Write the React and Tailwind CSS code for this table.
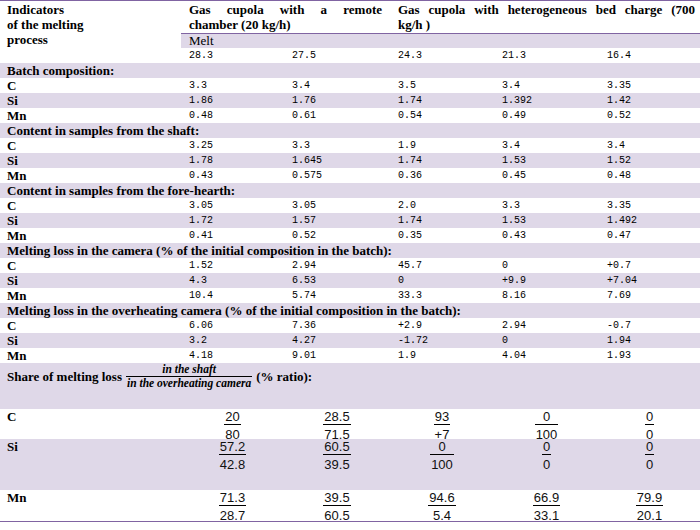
const GRID = "grid grid-cols-[181px_103px_106px_104px_105px_101px]";
const serif = "font-['Liberation_Serif',serif]";
const mono = "font-['Liberation_Mono',monospace] text-[10px]";

const sections = [
  {
    title: "Batch composition:",
    rows: [
      ["C", ["3.3", "3.4", "3.5", "3.4", "3.35"]],
      ["Si", ["1.86", "1.76", "1.74", "1.392", "1.42"]],
      ["Mn", ["0.48", "0.61", "0.54", "0.49", "0.52"]],
    ],
  },
  {
    title: "Content in samples from the shaft:",
    rows: [
      ["C", ["3.25", "3.3", "1.9", "3.4", "3.4"]],
      ["Si", ["1.78", "1.645", "1.74", "1.53", "1.52"]],
      ["Mn", ["0.43", "0.575", "0.36", "0.45", "0.48"]],
    ],
  },
  {
    title: "Content in samples from the fore-hearth:",
    rows: [
      ["C", ["3.05", "3.05", "2.0", "3.3", "3.35"]],
      ["Si", ["1.72", "1.57", "1.74", "1.53", "1.492"]],
      ["Mn", ["0.41", "0.52", "0.35", "0.43", "0.47"]],
    ],
  },
  {
    title: "Melting loss in the camera (% of the initial composition in the batch):",
    rows: [
      ["C", ["1.52", "2.94", "45.7", "0", "+0.7"]],
      ["Si", ["4.3", "6.53", "0", "+9.9", "+7.04"]],
      ["Mn", ["10.4", "5.74", "33.3", "8.16", "7.69"]],
    ],
  },
  {
    title: "Melting loss in the overheating camera (% of the initial composition in the batch):",
    rows: [
      ["C", ["6.06", "7.36", "+2.9", "2.94", "-0.7"]],
      ["Si", ["3.2", "4.27", "-1.72", "0", "1.94"]],
      ["Mn", ["4.18", "9.01", "1.9", "4.04", "1.93"]],
    ],
  },
];

const shares = [
  { label: "C", h: "h-[30px]", bg: "", values: [["20", "80"], ["28.5", "71.5"], ["93", "+7"], ["0", "100"], ["0", "0"]] },
  { label: "Si", h: "h-[51px]", bg: "bg-[#dfd8e8]", values: [["57.2", "42.8"], ["60.5", "39.5"], ["0", "100"], ["0", "0"], ["0", "0"]] },
  { label: "Mn", h: "h-[31px]", bg: "", values: [["71.3", "28.7"], ["39.5", "60.5"], ["94.6", "5.4"], ["66.9", "33.1"], ["79.9", "20.1"]] },
];

function DataRow({ label, values, shaded }) {
  return (
    <div className={`${GRID} h-[15px] leading-[15px] ${shaded ? "bg-[#dfd8e8]" : ""}`}>
      <div className="pl-[7px] font-bold text-[13px]">{label}</div>
      {values.map((v, i) => (
        <div key={i} className={`pl-2 ${mono}`}>{v}</div>
      ))}
    </div>
  );
}

function Fraction({ top, bottom }) {
  return (
    <div className="inline-flex flex-col items-center font-['Liberation_Sans',sans-serif] text-[13px] leading-[15px] text-[#111]">
      <span className="px-px">{top}</span>
      <span className="h-px w-full bg-black" />
      <span className="mt-[2px] px-px">{bottom}</span>
    </div>
  );
}

export default function App() {
  return (
    <div className={`w-[700px] bg-white text-black ${serif}`}>
      <div className="border-t border-[#8064a2]">
        <div className="flex">
          <div className="w-[181px] shrink-0 pl-[7px] pt-px text-[13px] font-bold leading-[15px]">
            Indicators
            <br />
            of the melting
            <br />
            process
          </div>
          <div className="flex-1">
            <div className="flex h-[33px] border-b border-[#8064a2] pt-px text-[13px] font-bold leading-[15px]">
              <div className="w-[209px] pl-2 pr-2">
                <div className="text-justify [text-align-last:justify]">Gas cupola with a remote</div>
                <div>chamber (20 kg/h)</div>
              </div>
              <div className="flex-1 pl-2 pr-[5px]">
                <div className="text-justify [text-align-last:justify]">Gas cupola with heterogeneous bed charge (700</div>
                <div>kg/h )</div>
              </div>
            </div>
            <div className="h-[14px] bg-[#dfd8e8] pl-2 text-[13px] leading-[14px]">Melt</div>
            <div className="grid h-[15px] grid-cols-[103px_106px_104px_105px_101px] leading-[15px]">
              {["28.3", "27.5", "24.3", "21.3", "16.4"].map((v) => (
                <div key={v} className={`pl-2 ${mono}`}>{v}</div>
              ))}
            </div>
          </div>
        </div>

        {sections.map((s) => (
          <div key={s.title}>
            <div className="h-[15px] bg-[#dfd8e8] pl-[7px] text-[13px] font-bold leading-[15px] whitespace-nowrap">
              {s.title}
            </div>
            {s.rows.map(([label, values], i) => (
              <DataRow key={label} label={label} values={values} shaded={i === 1} />
            ))}
          </div>
        ))}

        <div className="h-[46px] bg-[#dfd8e8] pl-[7px]">
          <div className="flex items-center pt-px text-[13px] font-bold leading-[15px]">
            <span>Share of melting loss</span>
            <span className="mx-[4px] inline-flex flex-col items-center font-['Liberation_Serif',serif] text-[11.5px] italic leading-[11px]">
              <span className="px-1">in the shaft</span>
              <span className="my-px h-px w-full bg-black" />
              <span className="px-px">in the overheating camera</span>
            </span>
            <span>(% ratio):</span>
          </div>
        </div>

        {shares.map((r) => (
          <div key={r.label} className={`${GRID} ${r.h} ${r.bg} overflow-hidden`}>
            <div className="pl-[7px] text-[13px] font-bold leading-[15px]">{r.label}</div>
            {r.values.map(([a, b], i) => (
              <div key={i} className="flex justify-center">
                <Fraction top={a} bottom={b} />
              </div>
            ))}
          </div>
        ))}
        <div className="border-t border-[#8064a2]" />
      </div>
    </div>
  );
}
